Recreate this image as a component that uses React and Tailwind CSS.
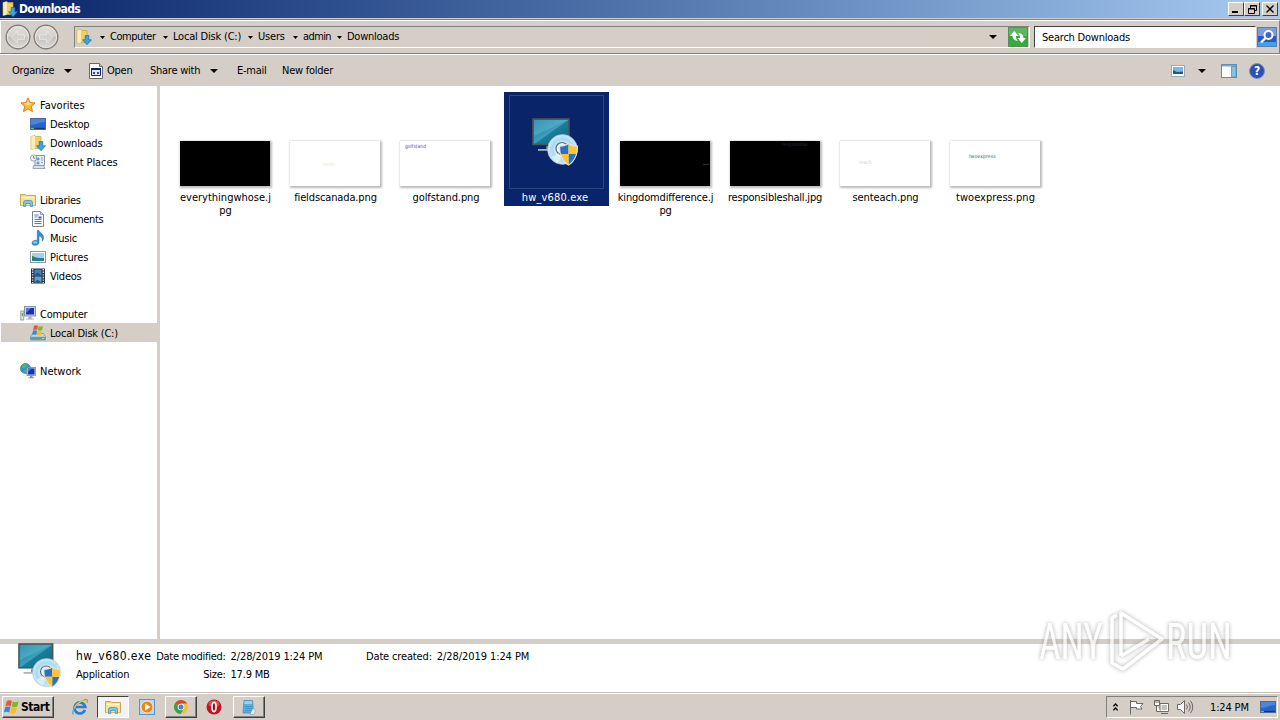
import { useId } from 'react';

const crumbs = [
  { name: 'Computer', cls: 'w-[63px] tracking-[-0.45px]' },
  { name: 'Local Disk (C:)', cls: 'w-[85px] tracking-[-0.2px]' },
  { name: 'Users', cls: 'w-[45px] tracking-[-0.2px]' },
  { name: 'admin', cls: 'w-[44px] tracking-[-0.6px]' },
  { name: 'Downloads', cls: 'tracking-[-0.25px]' },
];

const navGroups = [
  {
    title: 'Favorites',
    icon: StarIcon,
    textCls: 'tracking-[0px]',
    items: [
      { name: 'Desktop', icon: DesktopIcon },
      { name: 'Downloads', icon: DownloadsIcon },
      { name: 'Recent Places', icon: RecentIcon, textCls: 'tracking-[-0.1px]' },
    ],
  },
  {
    title: 'Libraries',
    icon: FolderIcon,
    items: [
      { name: 'Documents', icon: DocumentIcon, textCls: 'tracking-[-0.35px]' },
      { name: 'Music', icon: MusicIcon },
      { name: 'Pictures', icon: PictureIcon, textCls: 'tracking-[-0.1px]' },
      { name: 'Videos', icon: VideoIcon },
    ],
  },
  {
    title: 'Computer',
    icon: ComputerIcon,
    items: [{ name: 'Local Disk (C:)', icon: DiskIcon, active: true }],
  },
  { title: 'Network', icon: NetworkIcon, textCls: 'tracking-[0px]', items: [] },
];

const files = [
  { name: 'everythingwhose.jpg', lines: ['everythingwhose.j', 'pg'], textCls: 'pl-[1px]', dark: true },
  { name: 'fieldscanada.png', textCls: 'tracking-[-0.13px] pl-[1px]', mark: 'fields', markCls: 'left-[33px] top-[20px] text-[#f3e6bd]' },
  { name: 'golfstand.png', textCls: 'pl-[2px] tracking-[-0.1px]', mark: 'golfstand', markCls: 'left-[5px] top-[2px] text-[#4f3fd0] tracking-[0px]' },
  { name: 'hw_v680.exe', selected: true },
  { name: 'kingdomdifference.jpg', lines: ['kingdomdifference.j', 'pg'], textCls: 'tracking-[-0.17px] pl-[1px]', dark: true, line: true },
  { name: 'responsibleshall.jpg', textCls: 'tracking-[-0.2px]', dark: true, mark: 'responsible', markCls: 'left-[52px] top-[0px] text-[#173540]' },
  { name: 'senteach.png', textCls: 'tracking-[-0.1px] pl-[1px]', mark: 'teach', markCls: 'left-[19px] top-[18px] text-[#d0d0d0]' },
  { name: 'twoexpress.png', textCls: 'tracking-[0.05px] pl-[1px]', mark: 'twoexpress', markCls: 'left-[19px] top-[12px] text-[#375a63] tracking-[0.1px]' },
];

/* ---------- icons ---------- */

function StarIcon() {
  return (
    <svg width="16" height="16" viewBox="0 0 16 16">
      <path d="M8 .8l2.1 4.7 5 .5-3.8 3.4 1.2 5.2L8 11.9l-4.5 2.7 1.2-5.2L.9 6l5-.5z" fill="#fdb62f" stroke="#d9731a" strokeWidth=".9" />
      <path d="M8 2.6l1.4 3.6 3.6.4-5 1.6-4.6-1.6 3.4-.4z" fill="#ffe486" />
    </svg>
  );
}

function DesktopIcon() {
  return (
    <svg width="16" height="16" viewBox="0 0 16 16">
      <rect x=".5" y="2.5" width="15" height="11" fill="#2864c8" stroke="#4868a0" />
      <path d="M1 3h14v3C9 6 6 9 1 9z" fill="#4c86dc" />
      <path d="M1 11.8h14V13H1z" fill="#243454" />
      <path d="M1 11.8h3V13H1z" fill="#6cc04c" />
    </svg>
  );
}

function DownloadsIcon() {
  return (
    <svg width="16" height="16" viewBox="0 0 16 16">
      <path d="M1 1.5L5 .5l1 1h5v12H5l-4 1z" fill="#f0d060" stroke="#c8a040" strokeWidth=".7" />
      <path d="M1.3 1.6L5 .8v12.6l-3.7 1.1z" fill="#fbeeb4" />
      <path d="M9.2 6.500h3.600v4.300h2.700l-4.500 4.900-4.500-4.900h2.700z" fill="#3aa4e8" stroke="#1868b0" strokeWidth=".7" />
    </svg>
  );
}

function RecentIcon() {
  return (
    <svg width="16" height="16" viewBox="0 0 16 16">
      <path d="M5 1.500h9.500v10H5z" fill="#e4ecf4" stroke="#8494a4" />
      <path d="M7 4h2v2H7zM11 4h2M11 6h2M7 8h2v2H7zM11 8.500h2" fill="#88a8c8" stroke="#7890a8" strokeWidth=".8" />
      <path d="M3.500 11.500h10l1.500 3H3z" fill="#d8e0e8" stroke="#8494a4" strokeWidth=".8" />
      <circle cx="3.600" cy="4" r="3.100" fill="#f8fafc" stroke="#8494a4" strokeWidth=".9" />
      <path d="M3.600 2v2.200h1.800" fill="none" stroke="#506070" strokeWidth=".8" />
    </svg>
  );
}

function FolderIcon() {
  return (
    <svg width="16" height="16" viewBox="0 0 16 16">
      <path d="M.5 2.500h5l1 1h9v10H.5z" fill="#efd370" stroke="#c09a3c" strokeWidth=".8" />
      <path d="M1.500 4.500h13v2h-13z" fill="#fff8d8" />
      <path d="M1 6.500h14v6.800H1z" fill="#f8e498" />
      <path d="M3.500 14.500v-4q0-2 2-2h5q2 0 2 2v4h-2.300v-3H5.800v3z" fill="#7cc4ea" stroke="#3c88bc" strokeWidth=".7" />
    </svg>
  );
}

function DocumentIcon() {
  return (
    <svg width="16" height="16" viewBox="0 0 16 16">
      <path d="M2.500.5h8l3 3v12h-11z" fill="#fbfdff" stroke="#78889c" />
      <path d="M10.500.5v3h3" fill="#cfdbe8" stroke="#78889c" strokeWidth=".8" />
      <path d="M4.500 4h4M4.500 6h3M4.500 8.500h7M4.500 10.500h7M4.500 12.500h7" stroke="#5c80b0" />
      <path d="M8.500 5.500h3v2h-3z" fill="#3c64a4" />
    </svg>
  );
}

function MusicIcon() {
  return (
    <svg width="16" height="16" viewBox="0 0 16 16">
      <path d="M7.300.5h1.600c.4 2.400 4.800 3.200 4.700 7.200 0 1.500-.7 2.600-1.400 3.400.8-3-1.100-4.400-3.200-5.300v6.600c0 1.700-1.800 2.900-3.900 2.900-1.900 0-3.100-1-3.100-2.400 0-1.800 2.200-3 5.300-2.500z" fill="#2f90d8" stroke="#1a62a0" strokeWidth=".5" />
      <ellipse cx="5.200" cy="12.400" rx="2" ry="1.200" fill="#8ccdf4" />
    </svg>
  );
}

function PictureIcon() {
  return (
    <svg width="16" height="16" viewBox="0 0 16 16">
      <rect x=".5" y="2.500" width="15" height="11" fill="#fff" stroke="#8c98a4" />
      <rect x="2" y="4" width="12" height="8" fill="#9cd4f2" />
      <path d="M2 7.500c3 .2 5 2 12 1.500v3H2z" fill="#2c7c94" />
      <path d="M2 7c2 .5 3 2 5 2.500L2 11z" fill="#3c8048" />
    </svg>
  );
}

function VideoIcon() {
  return (
    <svg width="16" height="16" viewBox="0 0 16 16">
      <rect x="1" y=".5" width="14" height="15" fill="#283038" />
      <path d="M2.700 1v14M13.300 1v14" stroke="#d4dce4" strokeWidth="1.400" strokeDasharray="1.4 1.2" />
      <rect x="4.500" y="1.500" width="7" height="6" fill="#3c84c4" />
      <rect x="4.500" y="8.500" width="7" height="6" fill="#58a4d8" />
      <path d="M4.500 7.500l3-3 4 3zM4.500 14.500l3-3 4 3z" fill="#245880" />
    </svg>
  );
}

function ComputerIcon() {
  return (
    <svg width="16" height="16" viewBox="0 0 16 16">
      <rect x="4.500" y=".5" width="11" height="9.500" fill="#c8d0d8" stroke="#8c949c" />
      <rect x="6" y="2" width="8" height="6.500" fill="#1c2cb4" />
      <path d="M6 2h5L6 7z" fill="#5c78e8" />
      <path d="M8.500 10.500h3v2h2.500v1H6v-1h2.500z" fill="#a4acb4" />
      <rect x=".8" y="5" width="3" height="9" fill="#dce4e4" stroke="#88908c" strokeWidth=".8" />
      <path d="M1.800 7h1.200v3H1.800z" fill="#5cac4c" />
    </svg>
  );
}

function WinFlag() {
  return (
    <svg width="18" height="18" viewBox="0 0 16 16">
      <path d="M3.400 2.600C5 1.600 6.400 1.800 8 2.600L6.900 7.300c-1.600-.8-3-.9-4.700 0z" fill="#e8562a" />
      <path d="M8.800 3c1.700.8 3.200.8 5.200-.2l-1.300 4.800c-1.700.9-3.300.9-5 .1z" fill="#7cb82e" />
      <path d="M2 8.100c1.700-.9 3.100-.8 4.700 0l-1.200 4.700C4 12 2.500 12 .8 12.900z" fill="#3a86dc" />
      <path d="M7.500 8.500c1.700.8 3.300.7 5-.1l-1.300 4.800c-1.700.9-3.200.8-4.900 0z" fill="#fbbc1c" />
    </svg>
  );
}

function DiskIcon() {
  return (
    <svg width="16" height="16" viewBox="0 0 16 16">
      <path d="M2.500 8.500h11l2 3v3.500h-15v-3.500z" fill="#c4d8dc" stroke="#6c8c98" strokeWidth=".7" />
      <path d="M.8 11.800h14.500v3H.8z" fill="#5c9cac" />
      <path d="M12 13h2v1h-2z" fill="#9cf08c" />
      <path d="M4 .8C5.500 0 6.800.1 8 .8L7.200 5c-1.300-.7-2.700-.7-4 0z" fill="#e8562a" />
      <path d="M8.600 1c1.400.7 2.800.7 4.400-.1l-.9 4.200c-1.400.7-2.900.8-4.300.1z" fill="#7cb82e" />
      <path d="M3 5.700c1.400-.8 2.700-.7 4 0L6.200 10c-1.300-.7-2.600-.7-4.100.1z" fill="#3a86dc" />
      <path d="M7.700 5.900c1.400.7 2.800.7 4.300-.1l-.9 4.200c-1.400.7-2.800.7-4.200 0z" fill="#fbbc1c" />
    </svg>
  );
}

function NetworkIcon() {
  return (
    <svg width="16" height="16" viewBox="0 0 16 16">
      <circle cx="5.500" cy="5.500" r="5" fill="#3098d0" stroke="#1c6898" strokeWidth=".6" />
      <path d="M2 3C3.500.5 6 .5 7.500 1.500L6 4 3 5.500zM4 7.500l3-1 1 2-2 2z" fill="#58b858" />
      <rect x="7" y="4.500" width="8.500" height="8" fill="#c8d4e0" stroke="#7c8894" strokeWidth=".8" />
      <rect x="8" y="5.500" width="6.500" height="6" fill="#1830b8" />
      <path d="M8 5.500h3.700l-3.700 4z" fill="#4c6ce0" />
      <path d="M10 13h2.500v1.200H14v1H8.500v-1H10z" fill="#848c94" />
    </svg>
  );
}

// monitor with a disc and the UAC shield in front of it
function InstallerIcon({ size = 48 }) {
  const id = useId();
  return (
    <svg width={size} height={size} viewBox="0 0 48 48" className="shrink-0">
      <defs>
        <linearGradient id={`${id}s`} x1="0" y1="0" x2="1" y2="1">
          <stop offset="0" stopColor="#1a7898" />
          <stop offset=".5" stopColor="#3aa0bc" />
          <stop offset=".52" stopColor="#1c7c9c" />
          <stop offset="1" stopColor="#126280" />
        </linearGradient>
        <radialGradient id={`${id}d`}>
          <stop offset=".3" stopColor="#e8f6fc" />
          <stop offset=".7" stopColor="#a8d8f0" />
          <stop offset="1" stopColor="#d4ecf8" />
        </radialGradient>
      </defs>
      <rect x="1" y="1" width="36" height="25.500" fill={`url(#${id}s)`} stroke="#4c5458" strokeWidth="1.600" />
      <path d="M2 2h34L2 18z" fill="#6cc0d4" opacity=".4" />
      <path d="M14 28h8v3h-8z" fill="#6c7478" />
      <path d="M6 31h18v1.800H6z" fill="#a8b0b4" />
      <circle cx="30.500" cy="31.500" r="15" fill={`url(#${id}d)`} stroke="#8cbcd8" strokeWidth=".6" />
      <circle cx="30" cy="30.500" r="6" fill="#e8f2f8" stroke="#586c7c" strokeWidth="1.200" />
      <path d="M20 39l7-4 2 7-4 3z" fill="#fff" opacity=".5" />
      <path d="M27 27.500c4 0 7-1 9.500-2.500 2.500 1.500 5.500 2.500 9.500 2.500 0 8-2 16-9.500 20.200C29 43.500 27 35.500 27 27.500z" fill="#e0e4e8" />
      <path d="M28.200 28.700c3.200-.2 6-1 8.300-2.400v9.700h-7.500c-.6-2-.8-4.900-.8-7.300zM36.500 36h7.500c-1.200 4-3.500 8-7.500 10.400z" fill="#2c70c0" />
      <path d="M44.800 28.700c-3.200-.2-6-1-8.300-2.400v9.700h7.500c.6-2 .8-4.900.8-7.300zM36.500 36h-7.500c1.200 4 3.500 8 7.500 10.400z" fill="#fcc430" />
    </svg>
  );
}

function OpenIcon() {
  return (
    <svg width="14" height="16" viewBox="0 0 14 16">
      <path d="M.5.500h10l3 3v12H.5z" fill="#fff" stroke="#666" />
      <path d="M10.500.500v3h3" fill="#ccc" stroke="#666" />
      <path d="M2.500 5.500h9v7h-9z" fill="#e4e4e8" stroke="#10206c" />
      <path d="M2 5h10v2H2z" fill="#10206c" />
      <path d="M4 9h2v2H4zM8 9h2v2H8z" fill="#2c48a0" />
    </svg>
  );
}

function RefreshIcon() {
  return (
    <svg width="20" height="20" viewBox="0 0 20 20">
      <rect x=".5" y=".5" width="19" height="19" fill="#34ac3c" stroke="#5c8c5c" />
      <path d="M1 1h18v8H1z" fill="#5cb860" />
      <path d="M2 9l4.200-5L10.500 9H8c0 2.500.5 3.500 2 5-3.500-.5-5.300-2-5.500-5z" fill="#fff" />
      <path d="M18 11l-4.200 5-4.300-5H12c0-2.500-.5-3.500-2-5 3.500.5 5.300 2 5.500 5z" fill="#fff" />
    </svg>
  );
}

function SearchIcon() {
  return (
    <svg width="20" height="20" viewBox="0 0 20 20">
      <rect width="20" height="20" fill="#2c58c0" />
      <path d="M0 0h20v9H0z" fill="#7c9cdc" />
      <path d="M0 15h20v5H0z" fill="#38a4ec" />
      <circle cx="11.500" cy="8" r="4" fill="#3c68c8" stroke="#fff" strokeWidth="2" />
      <path d="M8.500 11L4 15.500" stroke="#fff" strokeWidth="2.400" />
      <rect x=".5" y=".5" width="19" height="19" fill="none" stroke="#5c7cb4" />
    </svg>
  );
}

function ArrowCircle({ flip }) {
  const id = useId();
  return (
    <svg width="26" height="26" viewBox="0 0 26 26" className={flip ? '-scale-x-100' : ''}>
      <defs>
        <linearGradient id={id} x1="0" y1="0" x2="0" y2="1">
          <stop offset="0" stopColor="#e4e1dd" />
          <stop offset=".48" stopColor="#d4d1cd" />
          <stop offset=".5" stopColor="#c4c1bd" />
          <stop offset="1" stopColor="#dedbd7" />
        </linearGradient>
      </defs>
      <circle cx="13" cy="13" r="11.800" fill={`url(#${id})`} stroke="#807e7c" strokeWidth="1.400" />
      <circle cx="13" cy="13" r="10.600" fill="none" stroke="#e8e6e3" />
      <path d="M6.500 13l6-6v3.700h7v4.600h-7V19z" fill="#d4d1cd" stroke="#e6e3e0" />
    </svg>
  );
}

function Caret({ small }) {
  return (
    <svg width={small ? 5 : 8} height={small ? 3 : 4} viewBox="0 0 8 4" preserveAspectRatio="none" className="shrink-0">
      <path d="M0 0h8L4 4z" fill="#000" />
    </svg>
  );
}

function IeIcon() {
  return (
    <svg width="18" height="18" viewBox="0 0 18 18">
      <path d="M14 12A5.500 5.500 0 1 1 14.300 9H5" fill="none" stroke="#2c7cd4" strokeWidth="2.700" />
      <path d="M2.500 16.500C-.5 14 6 4.500 12.500 2c3-1.200 5-.5 3.500 2.800" fill="none" stroke="#5ca4e4" strokeWidth="1.300" />
      <path d="M3 10C6 4.500 13 1 16 3" fill="none" stroke="#ecc040" strokeWidth="1.300" />
    </svg>
  );
}

function WmpIcon() {
  return (
    <svg width="16" height="16" viewBox="0 0 16 16">
      <rect x=".5" y=".5" width="15" height="15" fill="#b4d8f0" stroke="#5c94c4" />
      <circle cx="8" cy="8" r="6" fill="#f08418" stroke="#fff" strokeWidth=".7" />
      <path d="M6 4.500l5.500 3.500L6 11.500z" fill="#fff" />
    </svg>
  );
}

function ChromeIcon() {
  return (
    <svg width="16" height="16" viewBox="0 0 16 16">
      <circle cx="8" cy="8" r="7" fill="#f4c428" />
      <path d="M8 8L1.900 4.500A7 7 0 0 1 14.100 4.500H8z" fill="#dc4434" />
      <path d="M1.900 4.500A7 7 0 0 0 7.500 15L11 9.700 8 8z" fill="#34a050" />
      <circle cx="8" cy="8" r="3.300" fill="#fff" />
      <circle cx="8" cy="8" r="2.500" fill="#4080e8" />
    </svg>
  );
}

function OperaIcon() {
  return (
    <svg width="16" height="16" viewBox="0 0 16 16">
      <circle cx="8" cy="8" r="7.500" fill="#c01420" />
      <ellipse cx="8" cy="5" rx="5.500" ry="3.500" fill="#d85058" />
      <ellipse cx="8" cy="8" rx="2" ry="4.600" fill="#a00c18" stroke="#fff" strokeWidth="1.700" />
    </svg>
  );
}

function NotepadIcon() {
  return (
    <svg width="16" height="16" viewBox="0 0 16 16">
      <path d="M3 1.500h8.500l1 12.500H2z" fill="#58b0e0" stroke="#4c88b0" strokeWidth=".8" />
      <path d="M3.500 2h7.500l.3 3H3.300z" fill="#98d0f0" />
      <path d="M4 7.500h7M4 9.500h7M4 11.500h7" stroke="#3888bc" strokeWidth=".7" />
      <path d="M12 9l2.500 3-2 3.500H9z" fill="#e4f0f8" stroke="#7c98a8" strokeWidth=".6" />
    </svg>
  );
}

function TrayIcons() {
  return (
    <svg width="68" height="16" viewBox="0 0 68 16" fill="#fff" stroke="#6c6864">
      <path d="M1.500 1v14.500M1.500 2.500h6v2h6.500l-2.500 3 1.500 2.500H7.500v-1.500h-6" />
      <path d="M31 4.500h8.500v8H31zM32 14.500h7" />
      <path d="M32.500 6h5.500v5h-5.500z" fill="#c4c0bc" stroke="none" />
      <path d="M25.500 1.500h5v5h-5zM27.500 6.500v6h4M27 1v3M29 1v3" />
      <path d="M48.500 5.500h3l4-4v13l-4-4h-3z" />
      <path d="M57.500 5.500q2 2.500 0 5M59.500 3.500q3.500 4.500 0 9M61.500 1.800q4.500 6.200 0 12.400" fill="none" />
    </svg>
  );
}

/* ---------- window parts ---------- */

function WindowButton({ children }) {
  return (
    <button className="flex h-[14px] w-4 items-center justify-center border border-white border-r-[#404040] border-b-[#404040] bg-[#d4cec7]">
      {children}
    </button>
  );
}

function TitleBar() {
  return (
    <div className="flex h-[18px] shrink-0 items-center bg-linear-to-r from-[#0a246a] to-[#a6caf0] pl-[2px]">
      <DownloadsIcon />
      <span className="ml-[1px] text-[12px] leading-[18px] font-bold tracking-[-0.6px] text-white">Downloads</span>
      <div className="ml-auto flex pr-[2px]">
        <WindowButton>
          <span className="mt-[6px] mr-[2px] h-[2px] w-[6px] bg-black"></span>
        </WindowButton>
        <WindowButton>
          <svg width="9" height="9" viewBox="0 0 9 9" fill="none" stroke="#000">
            <path d="M2.500 3V.5h6v5H6.500M2 1h7M.5 3.500h6v5h-6zM0 4h7" />
          </svg>
        </WindowButton>
        <div className="ml-[2px]">
          <WindowButton>
            <svg width="8" height="8" viewBox="0 0 8 8" stroke="#000" strokeWidth="1.400">
              <path d="M.5.500l7 7M7.500.500l-7 7" />
            </svg>
          </WindowButton>
        </div>
      </div>
    </div>
  );
}

function AddressBar() {
  return (
    <div className="flex h-[36px] shrink-0 flex-col border-b border-[#808080]">
      <div className="h-px bg-[#d4cec7]"></div>
      <div className="h-px bg-[#808080]"></div>
      <div className="flex flex-1 items-center border-t border-r border-l border-t-white border-r-[#808080] border-l-white pl-[4px]">
        <div className="flex w-[54px] items-center gap-[2px]">
          <ArrowCircle />
          <ArrowCircle flip />
        </div>
        <div className="ml-[15px] flex h-[22px] w-[956px] items-center border border-t-[#808080] border-r-white border-b-white border-l-[#808080] pl-px">
          <DownloadsIcon />
          <div className="ml-[8px] flex items-center">
            {crumbs.map((crumb) => (
              <div key={crumb.name} className={`flex items-center ${crumb.cls}`}>
                <Caret small />
                <span className="ml-[5px] whitespace-nowrap">{crumb.name}</span>
              </div>
            ))}
          </div>
          <div className="ml-auto flex items-center gap-[11px] pr-px">
            <Caret />
            <RefreshIcon />
          </div>
        </div>
        <div className="ml-[4px] flex h-[22px] w-[222px] items-center border border-t-[#404040] border-r-white border-b-white border-l-[#404040] bg-white pt-px pl-[7px]">
          <span className="tracking-[-0.22px]">Search Downloads</span>
        </div>
        <div className="ml-px">
          <SearchIcon />
        </div>
      </div>
    </div>
  );
}

function Toolbar() {
  return (
    <div className="flex h-[32px] shrink-0 items-center border-t border-white pl-[12px] tracking-[-0.25px]">
      <div className="flex w-[77px] items-center">
        <span className="w-[52px]">Organize</span>
        <Caret />
      </div>
      <div className="flex w-[61px] items-center">
        <OpenIcon />
        <span className="ml-[4px]">Open</span>
      </div>
      <div className="flex w-[87px] items-center">
        <span className="w-[60px] whitespace-nowrap">Share with</span>
        <Caret />
      </div>
      <span className="w-[45px]">E-mail</span>
      <span>New folder</span>
      <div className="ml-auto flex items-center pr-[15px]">
        <svg width="14" height="12" viewBox="0 0 14 12">
          <rect x=".5" y=".5" width="13" height="11" fill="#fff" stroke="#a0a8b0" />
          <path d="M2 2h10v7H2z" fill="#78b8e8" />
          <path d="M2 5l4 2 6-.5V9H2z" fill="#1c5c84" />
        </svg>
        <div className="ml-[13px]">
          <Caret />
        </div>
        <svg width="16" height="14" viewBox="0 0 16 14" className="ml-[15px]">
          <rect x=".5" y=".5" width="15" height="13" fill="#fff" stroke="#5890b8" />
          <path d="M1 1h14v1.500H1z" fill="#78a8cc" />
          <path d="M10.500 2.500h4.500V13h-4.500z" fill="#8cc0e0" stroke="#5890b8" strokeWidth=".8" />
        </svg>
        <span className="ml-[12px] flex size-4 items-center justify-center rounded-full border border-[#8090c0] bg-[#2c50b4] text-[12px] font-bold text-white">?</span>
      </div>
    </div>
  );
}

function NavRow({ item, top }) {
  const Icon = item.icon;
  return (
    <div className={`flex h-[19px] items-center gap-[4px] whitespace-nowrap ${top ? 'pl-[19px]' : 'pl-[29px]'} ${item.active ? 'bg-[#d4cec7]' : ''}`}>
      <Icon />
      <span className={`pt-[2px] ${item.textCls || 'tracking-[-0.22px]'}`}>{item.name || item.title}</span>
    </div>
  );
}

function Sidebar() {
  return (
    <nav className="flex w-[160px] shrink-0 flex-col gap-[19px] border-r-[3px] border-[#d4cec7] pt-[9px] pl-px">
      {navGroups.map((group) => (
        <div key={group.title}>
          <NavRow item={group} top />
          {group.items.map((item) => (
            <NavRow key={item.name} item={item} />
          ))}
        </div>
      ))}
    </nav>
  );
}

function FileItem({ file }) {
  if (file.selected) {
    return (
      <div className="flex w-[110px] justify-center pl-[2px]">
        <div className="flex h-[114px] w-[105px] flex-col items-center bg-[#0a246a] pt-[3px]">
          <div className="flex h-[94px] w-[95px] items-center justify-center border border-[#2c4684]">
            <InstallerIcon size={48} />
          </div>
          <span className="pt-[2px] pr-[2px] leading-[14px] tracking-[0.15px] text-white">{file.name}</span>
        </div>
      </div>
    );
  }

  return (
    <div className="flex w-[110px] flex-col items-center pt-[49px]">
      <div className={`relative h-[45px] w-[90px] shadow-[1px_1px_2px_1px_#bbb] ${file.dark ? 'bg-black' : 'bg-white'}`}>
        {file.mark && (
          <span className={`absolute text-[5px] leading-[6px] ${file.markCls}`}>{file.mark}</span>
        )}
        {file.line && <span className="absolute top-[23px] left-[83px] h-px w-[6px] bg-[#2e2e2e]"></span>}
      </div>
      <div className={`pt-[5px] text-center leading-[13px] whitespace-nowrap ${file.textCls || ''}`}>
        {(file.lines || [file.name]).map((line) => (
          <div key={line}>{line}</div>
        ))}
      </div>
    </div>
  );
}

function DetailsPane() {
  return (
    <div className="flex h-[48px] shrink-0 bg-white pl-[18px]">
      <div className="-mt-px w-[58px]">
        <InstallerIcon size={45} />
      </div>
      <div className="w-[80px] pt-[3px]">
        <p className="text-[12px] leading-[18px] tracking-[0.42px]">hw_v680.exe</p>
        <p className="pt-px leading-[18px] tracking-[-0.18px]">Application</p>
      </div>
      <div className="w-[210px] pt-[4px] leading-[18px] whitespace-nowrap">
        <p className="flex gap-[5px]">
          <span className="w-[69.5px] text-right tracking-[-0.3px]">Date modified:</span>
          <span className="tracking-[-0.1px]">2/28/2019 1:24 PM</span>
        </p>
        <p className="flex gap-[5px]">
          <span className="w-[69.5px] text-right tracking-[-0.3px]">Size:</span>
          <span className="tracking-[-0.2px]">17.9 MB</span>
        </p>
      </div>
      <p className="flex gap-[5px] pt-[4px] leading-[18px]">
        <span className="tracking-[-0.15px]">Date created:</span>
        <span className="tracking-[-0.08px]">2/28/2019 1:24 PM</span>
      </p>
    </div>
  );
}

function TaskButton({ children, pressed }) {
  return (
    <button
      className={`flex h-[22px] w-[32px] items-center justify-center border ${
        pressed
          ? 'border-[#404040] border-r-white border-b-white bg-[#f5f3f1]'
          : 'border-white border-r-[#404040] border-b-[#404040] shadow-[inset_-1px_-1px_#808080]'
      }`}
    >
      {children}
    </button>
  );
}

function Taskbar() {
  return (
    <div className="flex h-[28px] shrink-0 flex-col">
      <div className="h-px bg-[#c4c0ba]"></div>
      <div className="flex flex-1 items-center border-t border-white pl-[2px]">
        <button className="flex h-[22px] w-[52px] items-center border border-white border-r-[#404040] border-b-[#404040] shadow-[inset_-1px_-1px_#808080]">
          <WinFlag />
          <span className="text-[12px] font-bold tracking-[-0.45px]">Start</span>
        </button>
        <div className="ml-[17px] w-[26px]">
          <IeIcon />
        </div>
        <TaskButton pressed>
          <FolderIcon />
        </TaskButton>
        <div className="mx-[10px]">
          <WmpIcon />
        </div>
        <TaskButton>
          <ChromeIcon />
        </TaskButton>
        <div className="mx-[9px] pr-[2px]">
          <OperaIcon />
        </div>
        <TaskButton>
          <NotepadIcon />
        </TaskButton>
        <div className="mr-[2px] ml-auto flex h-[22px] w-[172px] items-center border border-[#808080] border-r-white border-b-white pl-[6px]">
          <svg width="5" height="8" viewBox="0 0 5 8" fill="none" stroke="#000" strokeWidth="1.300">
            <path d="M.3 3.300L2.500 1l2.200 2.300M.3 7.300L2.500 5l2.200 2.300" />
          </svg>
          <div className="ml-[11px]">
            <TrayIcons />
          </div>
          <span className="ml-[12px] w-[51px] pt-[2px] pl-px whitespace-nowrap tracking-[-0.15px]">1:24 PM</span>
          <DesktopIcon />
        </div>
      </div>
    </div>
  );
}

// logo in the lower right corner, laid over the panes
function Watermark() {
  return (
    <div className="pointer-events-none absolute top-[604px] left-[1034px]">
      <svg width="220" height="80" viewBox="0 0 220 80" className="overflow-visible opacity-70 drop-shadow-[0_0_2px_#888]">
        <g fill="none" stroke="#fff" strokeWidth="3.500" strokeLinejoin="round">
          <path d="M87 52V9l41 26-39 30-11-6V14l5-3" />
          <path d="M87 52l28-17" />
        </g>
        <g fill="#fff" fontFamily="Roboto" fontSize="50" fontWeight="400">
          <text transform="translate(5 55) scale(.75 1)">ANY</text>
          <text transform="translate(132 55) scale(.77 1)">RUN</text>
        </g>
      </svg>
    </div>
  );
}

function App() {
  return (
    <div className="relative flex h-[720px] w-[1280px] flex-col overflow-hidden bg-[#d4cec7] font-['DejaVu_Sans_Condensed','DejaVu_Sans',sans-serif] text-[11px] leading-[14px] text-black [font-stretch:condensed]">
      <TitleBar />
      <AddressBar />
      <Toolbar />
      <main className="flex min-h-0 flex-1 bg-white">
        <Sidebar />
        <div className="flex items-start pt-[6px] pl-[10px]">
          {files.map((file) => (
            <FileItem key={file.name} file={file} />
          ))}
        </div>
      </main>
      <div className="h-[5px] shrink-0"></div>
      <DetailsPane />
      <Taskbar />
      <Watermark />
    </div>
  );
}

export default App;
